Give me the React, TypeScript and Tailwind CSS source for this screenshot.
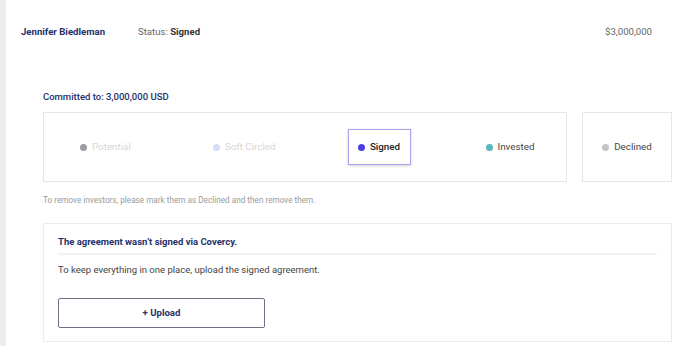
import React from "react";

const stages = [
  { name: "Potential", dot: "bg-[#9a9da3]", text: "text-[#d6d6d6]", gap: "ml-[36px]" },
  { name: "Soft Circled", dot: "bg-[#d3def8]", text: "text-[#d6d6d6]", gap: "ml-[82px]" },
  { name: "Signed", dot: "bg-[#4a3fe3]", text: "text-[#222222]", gap: "ml-[72px]", active: true },
  { name: "Invested", dot: "bg-[#5cb6bc]", text: "text-[#444444]", gap: "ml-[75px]" },
];

const App = () => {
  return (
    <div className="flex min-h-[346px] w-full bg-white font-['Roboto',sans-serif]">
      {/* side strip */}
      <div className="w-[6px] shrink-0 bg-[#ededed]" />

      <div className="flex-1">
        {/* Header */}
        <div className="flex h-[64px] items-center pl-[15px] pr-[36px] text-[9.6px]">
          <div className="w-[117px] font-bold text-[#25306a]">Jennifer Biedleman</div>
          <div className="flex-1 text-[#666666]">
            Status: <span className="font-bold text-[#333333]">Signed</span>
          </div>
          <div className="text-[#666666]">$3,000,000</div>
        </div>

        <div className="pl-[37px] pr-[16px]">
          <div className="mt-[25px] text-[9.5px] font-medium leading-[16px] text-[#25306a]">
            Committed to: 3,000,000 USD
          </div>

          {/* Stages */}
          <div className="mt-[7px] flex gap-[15px]">
            <div className="flex h-[70px] w-[524px] items-center border border-[#e6e6e6]">
              {stages.map((s) => (
                <div
                  key={s.name}
                  className={
                    s.active
                      ? `flex h-[36px] w-[63px] items-center justify-center gap-[5px] border border-[#a9a4f0] shadow-[0_1px_3px_rgba(0,0,0,0.18)] ${s.gap}`
                      : `flex items-center gap-[5px] ${s.gap}`
                  }
                >
                  <span className={`h-[7px] w-[7px] shrink-0 rounded-full ${s.dot}`} />
                  <span className={`text-[9.8px] ${s.active ? "font-medium" : ""} ${s.text}`}>
                    {s.name}
                  </span>
                </div>
              ))}
            </div>
            <div className="flex h-[70px] w-[90px] items-center justify-center gap-[5px] border border-[#e6e6e6]">
              <span className="h-[7px] w-[7px] rounded-full bg-[#c4c5c7]" />
              <span className="text-[9.8px] text-[#444444]">Declined</span>
            </div>
          </div>

          <div className="mt-[12px] text-[8.2px] leading-[12px] text-[#9a9a9a]">
            To remove investors, please mark them as Declined and then remove them.
          </div>

          {/* Agreement card */}
          <div className="mt-[17px] border border-[#ececec] px-[14px] pb-[13px] pt-[10px]">
            <div className="pb-[3px] text-[9.5px] font-bold leading-[16px] text-[#25306a]">
              The agreement wasn’t signed via Covercy.
            </div>
            <div className="h-[2px] bg-[#f2f2f2]" />
            <div className="mt-[7px] text-[9.5px] leading-[16px] text-[#444444]">
              To keep everything in one place, upload the signed agreement.
            </div>
            <button className="mt-[20px] flex h-[30px] w-[207px] items-center justify-center rounded-[2px] border border-[#6e7183] text-[9.6px] font-bold text-[#25306a]">
              + Upload
            </button>
          </div>
        </div>
      </div>
    </div>
  );
};

export default App;
